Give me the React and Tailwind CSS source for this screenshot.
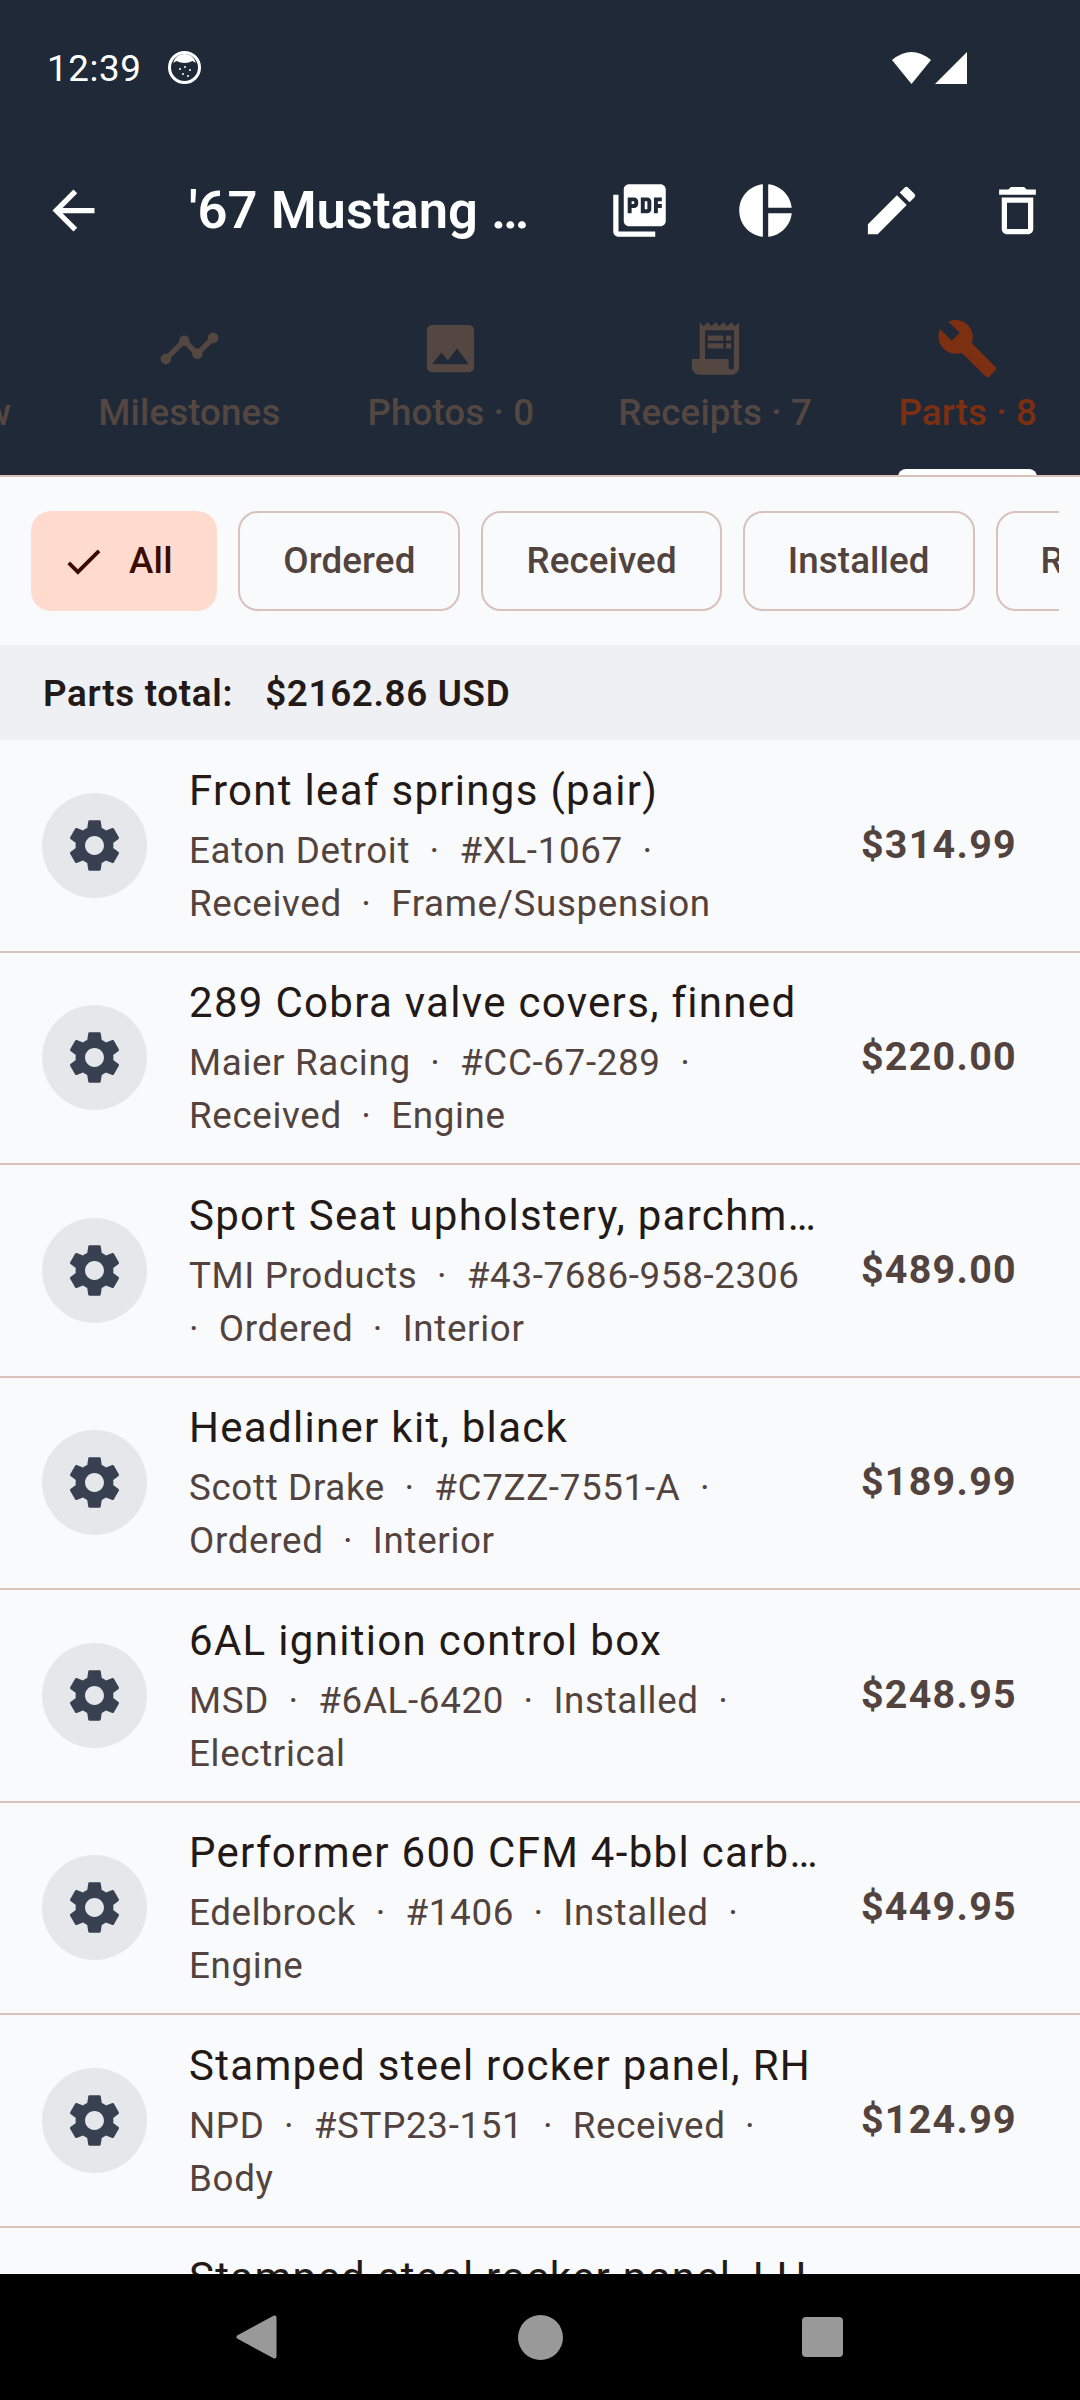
import React from "react";
import { MdArrowBack, MdPictureAsPdf, MdPieChart, MdEdit, MdDeleteOutline, MdTimeline, MdImage, MdReceiptLong, MdBuild, MdSettings, MdCheck } from "react-icons/md";

const S = "\u00a0\u00a0·\u00a0\u00a0";
const rows = [
  ["Front leaf springs (pair)", `Eaton Detroit${S}#XL-1067${S}`, `Received${S}Frame/Suspension`, "$314.99"],
  ["289 Cobra valve covers, finned", `Maier Racing${S}#CC-67-289${S}`, `Received${S}Engine`, "$220.00"],
  ["Sport Seat upholstery, parchment", `TMI Products${S}#43-7686-958-2306`, `·\u00a0\u00a0Ordered${S}Interior`, "$489.00"],
  ["Headliner kit, black", `Scott Drake${S}#C7ZZ-7551-A${S}`, `Ordered${S}Interior`, "$189.99"],
  ["6AL ignition control box", `MSD${S}#6AL-6420${S}Installed${S}`, "Electrical", "$248.95"],
  ["Performer 600 CFM 4-bbl carburetor", `Edelbrock${S}#1406${S}Installed${S}`, "Engine", "$449.95"],
  ["Stamped steel rocker panel, RH", `NPD${S}#STP23-151${S}Received${S}`, "Body", "$124.99"],
  ["Stamped steel rocker panel, LH", `NPD${S}#STP23-152${S}Received${S}`, "Body", "$124.99"],
];

function Chip({ label }) {
  return (
    <div className="shrink-0 h-[100px] px-[43px] flex items-center rounded-[20px] border-[2.5px] border-[#d8c2bb] text-[36.75px] font-medium tracking-[0.1px] text-[#53433f]">
      {label}
    </div>
  );
}

function Row({ title, a, b, price }) {
  return (
    <div className="shrink-0 h-[212.5px] flex items-center pl-[42px] pr-[63px] border-b-[2.5px] border-[#d8c2bb]">
      <div className="shrink-0 w-[105px] h-[105px] rounded-full bg-[#e5e7eb] flex items-center justify-center">
        <MdSettings className="w-[63px] h-[63px] text-[#374151]" />
      </div>
      <div className="ml-[42px] w-[631px] min-w-0">
        <div className="mb-[3px] text-[42px] leading-[60px] tracking-[1.3px] text-[#231917] truncate">{title}</div>
        <div className="text-[36.75px] leading-[53px] tracking-[0.656px] text-[#53433f] whitespace-pre">{a}</div>
        <div className="text-[36.75px] leading-[53px] tracking-[0.656px] text-[#53433f] whitespace-pre">{b}</div>
      </div>
      <div className="ml-auto pb-[2px] text-[39.4px] font-bold tracking-[1.3px] text-[#53433f]">{price}</div>
    </div>
  );
}

export default function App() {
  return (
    <div className="w-[1080px] h-[2400px] flex flex-col overflow-hidden bg-[#f9fafc]" style={{ fontFamily: "Roboto, sans-serif" }}>
      <header className="shrink-0 h-[477px] bg-[#1f2937] border-b-2 border-[#d8c2bb] flex flex-col">
        <div className="h-[135px] pl-[47px] pr-[113px] flex items-center text-white">
          <span className="pt-[2px] text-[36.75px] tracking-[0.6px]">12:39</span>
          <svg className="ml-[26px]" width="33" height="33" viewBox="0 0 33 33">
            <circle cx="16.5" cy="16.5" r="15" fill="none" stroke="#fff" strokeWidth="3" />
            <path d="M5 12 Q8 3 16.5 3 Q25 3 28 12 L24.5 10 Q16.5 14 8.5 10 Z" fill="#fff" />
            <circle cx="12" cy="18" r="1" fill="#fff" /><circle cx="17" cy="16" r="1" fill="#fff" /><circle cx="22" cy="19" r="1" fill="#fff" /><circle cx="15" cy="23" r="1" fill="#fff" /><circle cx="20" cy="25" r="1" fill="#fff" />
          </svg>
          <svg className="ml-auto" width="39" height="32" viewBox="0 0 39 32"><path d="M0 8 Q19.5 -8 39 8 L19.5 32 Z" fill="#fff" /></svg>
          <svg className="ml-[4px]" width="32" height="32" viewBox="0 0 32 32"><path d="M32 0 V32 H0 Z" fill="#fff" /></svg>
        </div>
        <div className="h-[150px] pl-[42px] pr-[31.5px] flex items-center text-white">
          <MdArrowBack className="shrink-0 w-[63px] h-[63px]" />
          <div className="ml-[84px] w-[350px] text-[52.5px] font-semibold whitespace-nowrap">'67 Mustang …</div>
          <div className="ml-auto flex items-center gap-[63px]">
            <MdPictureAsPdf className="w-[63px] h-[63px]" />
            <MdPieChart className="w-[63px] h-[63px]" />
            <MdEdit className="w-[63px] h-[63px]" />
            <MdDeleteOutline className="w-[63px] h-[63px]" />
          </div>
        </div>
        <div className="flex-1 flex justify-end overflow-hidden text-[36.75px] font-medium tracking-[0.1px] text-[#544741]">
          <div className="shrink-0 px-[43.5px] pt-[31.5px] flex flex-col items-center">
            <div className="h-[63px]" />
            <div className="mt-[8.5px] leading-[50px]">Overview</div>
          </div>
          <div className="shrink-0 px-[43.5px] pt-[31.5px] flex flex-col items-center">
            <MdTimeline className="w-[63px] h-[63px]" />
            <div className="mt-[8.5px] leading-[50px] whitespace-nowrap">Milestones</div>
          </div>
          <div className="shrink-0 px-[43.5px] pt-[31.5px] flex flex-col items-center">
            <MdImage className="w-[63px] h-[63px]" />
            <div className="mt-[8.5px] leading-[50px] whitespace-nowrap">Photos · 0</div>
          </div>
          <div className="shrink-0 pl-[40.5px] pr-[43.5px] pt-[31.5px] flex flex-col items-center">
            <MdReceiptLong className="w-[63px] h-[63px]" />
            <div className="mt-[8.5px] leading-[50px] whitespace-nowrap">Receipts · 7</div>
          </div>
          <div className="relative shrink-0 px-[43px] pt-[31.5px] flex flex-col items-center text-[#7d2f12]">
            <MdBuild className="w-[63px] h-[63px]" />
            <div className="mt-[8.5px] leading-[50px] whitespace-nowrap">Parts · 8</div>
            <div className="absolute left-[43px] right-[43px] bottom-[-2px] h-[8px] rounded-t-[8px] bg-white" />
          </div>
        </div>
      </header>

      <div className="shrink-0 ml-[31px] mr-[21px] py-[34px] flex gap-[21px] overflow-hidden">
        <div className="shrink-0 h-[100px] pl-[30px] pr-[44.5px] flex items-center rounded-[20px] bg-[#ffdbcf] text-[36.75px] font-medium tracking-[0.25px] text-[#3a0b01]">
          <MdCheck className="w-[45px] h-[45px]" />
          <span className="ml-[23px]">All</span>
        </div>
        <Chip label="Ordered" />
        <Chip label="Received" />
        <Chip label="Installed" />
        <Chip label="Returned" />
      </div>

      <div className="shrink-0 h-[95px] pl-[43px] pt-[2px] flex items-center bg-[#eff0f3] text-[36.75px] font-semibold tracking-[0.68px] text-[#231917]">
        <span>Parts total:</span>
        <span className="ml-[32px]">$2162.86 USD</span>
      </div>

      <div className="flex-1 min-h-0 overflow-hidden flex flex-col">
        {rows.map((r) => (
          <Row key={r[0]} title={r[0]} a={r[1]} b={r[2]} price={r[3]} />
        ))}
      </div>

      <nav className="shrink-0 h-[126px] bg-black flex items-center pl-[236px]">
        <svg width="41" height="44" viewBox="0 0 41 44"><path d="M38.5 2.5 V41.5 L2.5 22 Z" fill="#999" stroke="#999" strokeWidth="4" strokeLinejoin="round" /></svg>
        <div className="ml-[241px] w-[45px] h-[45px] rounded-full bg-[#999]" />
        <div className="ml-[239px] w-[41px] h-[40px] rounded-[4px] bg-[#999]" />
      </nav>
    </div>
  );
}
